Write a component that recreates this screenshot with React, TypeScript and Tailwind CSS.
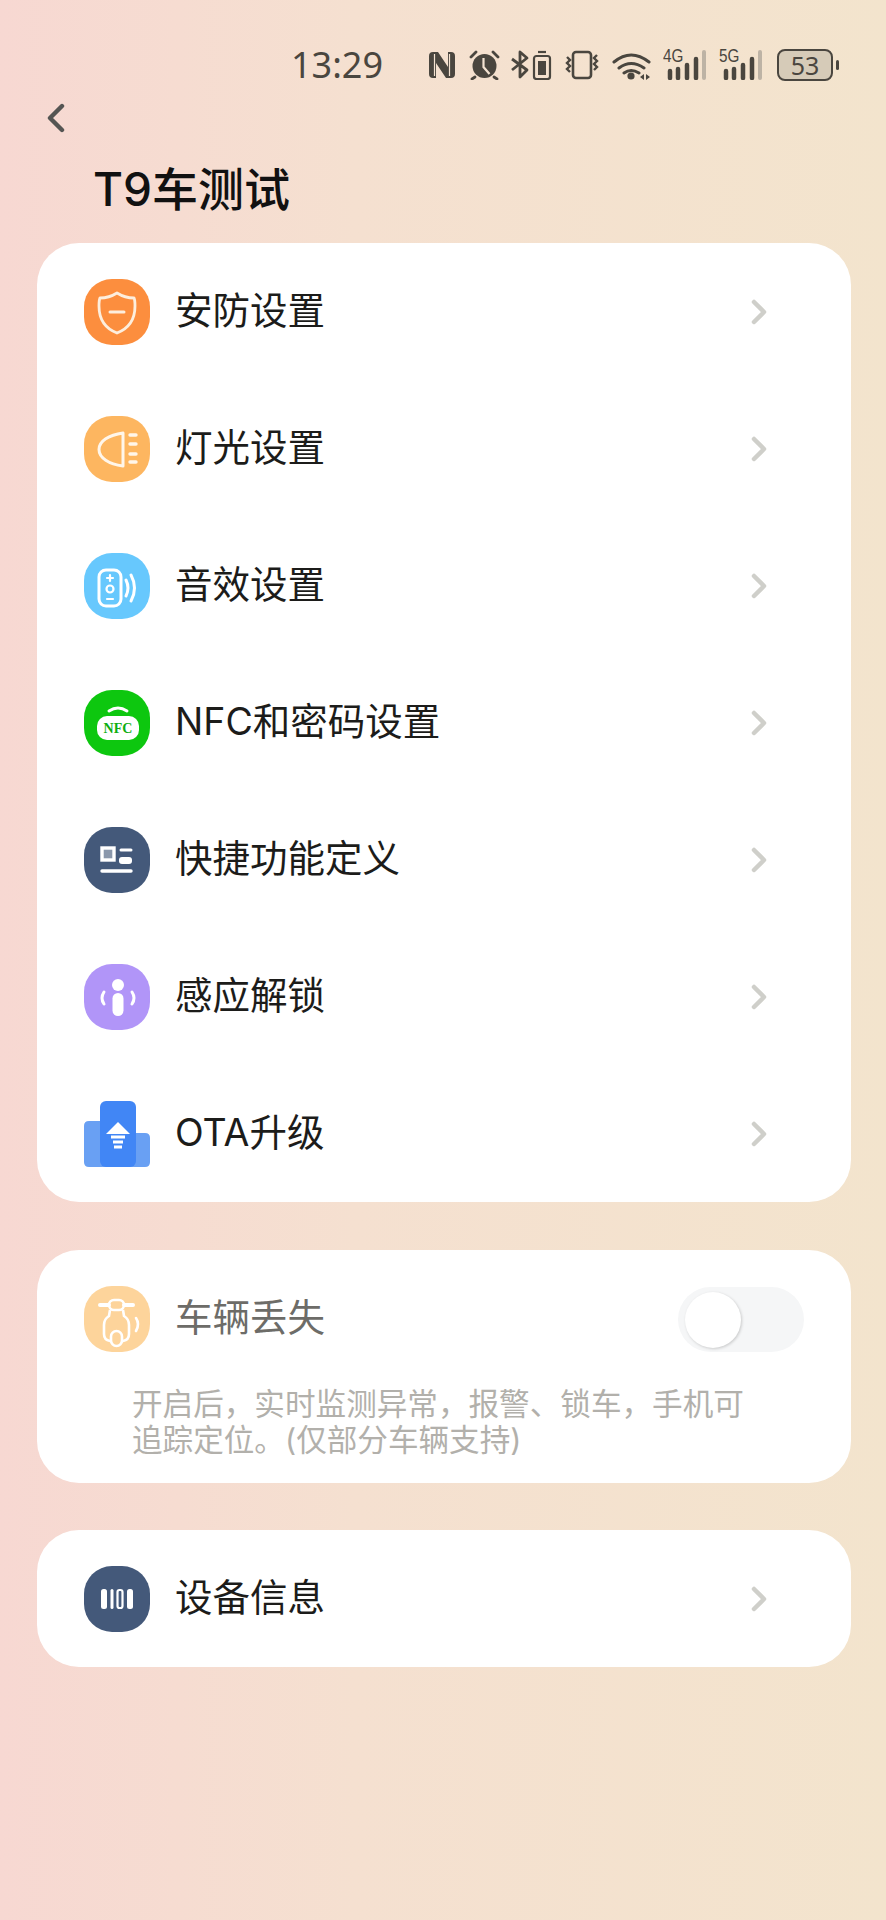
import type { ReactNode } from 'react';

const ink = '#4a463f';

function NfcMark() {
  return (
    <svg width="28" height="28" viewBox="0 0 28 28">
      <path d="M5 1h5l10 15V1h3q4 0 4 4v18q0 4-4 4h-5L8 12v15H5q-4 0-4-4V5q0-4 4-4z" fill={ink} />
      <path d="M6.500 3v22M21.500 3v22" stroke="#f4e3d2" strokeWidth="1.200" />
    </svg>
  );
}

function AlarmMark() {
  return (
    <svg width="31" height="30" viewBox="0 0 31 30">
      <circle cx="15.500" cy="16" r="12" fill={ink} />
      <path d="M14.500 8v9l6 7" stroke="#f4e3d2" strokeWidth="2.200" fill="none" />
      <path d="M2 7l5-5M29 7l-5-5M6 27l-3 2M25 27l3 2" stroke={ink} strokeWidth="2.800" strokeLinecap="round" />
    </svg>
  );
}

function BluetoothBatteryMark() {
  return (
    <svg width="41" height="30" viewBox="0 0 41 30">
      <path d="M1 9l15 11-7 7V2l7 6L1 20" stroke={ink} strokeWidth="2.800" fill="none" strokeLinejoin="round" />
      <rect x="23" y="6" width="16" height="23" rx="2.500" stroke={ink} strokeWidth="2.200" fill="none" />
      <rect x="27" y="11" width="8" height="14" fill={ink} />
      <path d="M27 2h8" stroke={ink} strokeWidth="2.200" />
    </svg>
  );
}

function VibrateMark() {
  return (
    <svg width="36" height="30" viewBox="0 0 36 30">
      <rect x="9" y="2" width="18" height="26" rx="3" stroke={ink} strokeWidth="2.600" fill="none" />
      <path d="M3 7l3 3-3 3 3 3-3 3 3 3M33 5l-3 3 3 3-3 3 3 3-3 3" stroke={ink} strokeWidth="2.400" fill="none" />
    </svg>
  );
}

function WifiMark() {
  return (
    <svg width="39" height="30" viewBox="0 0 39 30">
      <path d="M2 12q17-14 35 0M7 18q12-9 25 0M12 23q7-5 15 0" stroke={ink} strokeWidth="3" fill="none" strokeLinecap="round" />
      <circle cx="19" cy="26" r="3.600" fill={ink} />
      <path d="M28 27l4-3v6zM38 27l-4-3v6z" fill={ink} />
    </svg>
  );
}

function SignalMark({ label }: { label: string }) {
  return (
    <div className="relative h-[30px] w-[44px]">
      <span className="absolute left-0 top-[-4px] origin-left scale-x-[0.85] text-[18px] font-medium leading-[20px] text-[#4a463f] [font-family:'Liberation_Sans',sans-serif]">
        {label}
      </span>
      <svg className="absolute inset-0" width="44" height="30" viewBox="0 0 44 30">
        <path d="M7 21v7M15 19v9M24 15v13M33 9v19" stroke={ink} strokeWidth="4.500" strokeLinecap="round" />
        <path d="M41 2v26" stroke="#bdb3a5" strokeWidth="4" strokeLinecap="round" />
      </svg>
    </div>
  );
}

function StatusBar() {
  return (
    <div className="flex h-[56px] items-center pl-[291px] pt-[2px]">
      <span className="w-[137px] text-[36px] leading-[56px] text-[#4a463f] [font-family:'Noto_Sans',sans-serif]">13:29</span>
      <div className="flex items-center">
        <NfcMark />
        <div className="ml-[13px]"><AlarmMark /></div>
        <div className="ml-[11px]"><BluetoothBatteryMark /></div>
        <div className="ml-[12px]"><VibrateMark /></div>
        <div className="ml-[12px]"><WifiMark /></div>
        <div className="ml-[12px]"><SignalMark label="4G" /></div>
        <div className="ml-[12px]"><SignalMark label="5G" /></div>
        <div className="ml-[14px] flex items-center">
          <div className="flex h-[32px] w-[56px] items-center justify-center rounded-[8px] border-2 border-[#4a463f] bg-[#d6cbb8] text-[25px] leading-none text-[#4a463f] [font-family:'Noto_Sans',sans-serif]">
            53
          </div>
          <div className="ml-[3px] h-[10px] w-[3px] rounded-full bg-[#4a463f]" />
        </div>
      </div>
    </div>
  );
}

function IconTile({ bg, children }: { bg: string; children: ReactNode }) {
  return (
    <div className={`h-[66px] w-[66px] shrink-0 rounded-[28px] ${bg}`}>
      <svg width="66" height="66" viewBox="0 0 66 66">{children}</svg>
    </div>
  );
}

function ShieldIcon() {
  return (
    <IconTile bg="bg-[#fc8e3e]">
      <path d="M33 14q8 5 17 5 1 2 1 8 0 20-18 27Q15 47 15 27q0-6 1-8 9 0 17-5z" stroke="#fdeedd" strokeWidth="2.800" fill="none" strokeLinejoin="round" />
      <path d="M26 33h14" stroke="#fdeedd" strokeWidth="3" strokeLinecap="round" />
    </IconTile>
  );
}

function LightIcon() {
  return (
    <IconTile bg="bg-[#fdb660]">
      <path d="M39 17v33C25 48 15 42 15 33.500S25 19 39 17z" stroke="#fff6ea" strokeWidth="3" fill="none" strokeLinejoin="round" />
      <path d="M46 19h6M46 28h6M46 38h6M46 46h6" stroke="#fff6ea" strokeWidth="3.400" strokeLinecap="round" />
    </IconTile>
  );
}

function RemoteIcon() {
  return (
    <IconTile bg="bg-[#67c8fd]">
      <rect x="15" y="17" width="22" height="36" rx="7" stroke="#fff" strokeWidth="3" fill="none" />
      <path d="M26 22v6M23 25h6M23 46h6" stroke="#fff" strokeWidth="2.200" strokeLinecap="round" />
      <circle cx="26" cy="36" r="3.500" stroke="#fff" strokeWidth="2.200" fill="none" />
      <path d="M42 27q4 8 0 16M47 22q7 13 0 26" stroke="#fff" strokeWidth="3" fill="none" strokeLinecap="round" />
    </IconTile>
  );
}

function NfcIcon() {
  return (
    <IconTile bg="bg-[#0dc70f]">
      <path d="M25 21q9-6 18 0" stroke="#fff" strokeWidth="3" fill="none" strokeLinecap="round" />
      <rect x="13" y="26" width="42" height="24" rx="10" fill="#fff" />
      <text x="34" y="43" textAnchor="middle" fontSize="14" fontWeight="700" fill="#0dae10" fontFamily="'Liberation Serif', serif">NFC</text>
    </IconTile>
  );
}

function ShortcutIcon() {
  return (
    <IconTile bg="bg-[#44597a]">
      <rect x="18" y="21" width="12" height="12" stroke="#fff" strokeWidth="3.400" fill="#8a97ab" />
      <path d="M37 23h10" stroke="#fff" strokeWidth="3" strokeLinecap="round" />
      <rect x="35" y="30" width="13" height="7" rx="3" fill="#fff" />
      <path d="M18 44h29" stroke="#fff" strokeWidth="3.400" strokeLinecap="round" />
    </IconTile>
  );
}

function SenseIcon() {
  return (
    <IconTile bg="bg-[#b195f8]">
      <circle cx="34" cy="21" r="6" fill="#fff" />
      <rect x="28.500" y="29" width="11" height="23" rx="5.500" fill="#fff" />
      <path d="M20 28q-4 6 0 12M48 28q4 6 0 12" stroke="#fff" strokeWidth="3" fill="none" strokeLinecap="round" />
    </IconTile>
  );
}

function OtaIcon() {
  return (
    <div className="h-[66px] w-[66px] shrink-0">
      <svg width="66" height="66" viewBox="0 0 66 66">
        <path d="M5 20h20v46H5q-5 0-5-5V25q0-5 5-5z" fill="#69a0f3" />
        <path d="M40 32h21q5 0 5 5v24q0 5-5 5H40z" fill="#69a0f3" />
        <rect x="16" y="0" width="36" height="66" rx="6" fill="#4186f5" />
        <path d="M34 21l12 12H22z" fill="#fff" />
        <path d="M27 36h14M29 41h10M30 46h8" stroke="#fff" strokeWidth="3" />
      </svg>
    </div>
  );
}

function ScooterIcon() {
  return (
    <IconTile bg="bg-[#fdd49b]">
      <path d="M16 19h9M40 19h9" stroke="#fff" strokeWidth="4" strokeLinecap="round" />
      <rect x="25" y="14" width="15" height="10" rx="5" stroke="#fff" strokeWidth="2.600" fill="none" />
      <path d="M26 24l-1 6q-5 3-5 9v9q0 6 6 7h13q6-1 6-7v-9q0-6-5-9l-1-6" stroke="#fff" strokeWidth="2.600" fill="none" />
      <rect x="27" y="45" width="11" height="15" rx="5.500" stroke="#fff" strokeWidth="2.600" fill="#fdd49b" />
      <path d="M52 32q4 6 0 13" stroke="#fff" strokeWidth="2.600" fill="none" strokeLinecap="round" />
    </IconTile>
  );
}

function BarcodeIcon() {
  return (
    <IconTile bg="bg-[#44597a]">
      <rect x="17" y="23" width="6" height="20" rx="2.500" fill="#fff" />
      <rect x="26.500" y="23" width="3" height="20" rx="1.500" fill="#fff" />
      <rect x="33.500" y="24" width="5" height="18" rx="2" stroke="#fff" strokeWidth="2.200" fill="none" />
      <rect x="43" y="23" width="6" height="20" rx="2.500" fill="#fff" />
    </IconTile>
  );
}

function Chevron() {
  return (
    <svg width="16" height="26" viewBox="0 0 16 26" className="shrink-0">
      <path d="M3 3l10 10-10 10" stroke="#cfcfca" strokeWidth="4.500" fill="none" strokeLinejoin="round" strokeLinecap="round" />
    </svg>
  );
}

function Row({ icon, label }: { icon: ReactNode; label: string }) {
  return (
    <div className="flex h-[137px] items-center pl-[47px] pr-[84px]">
      {icon}
      <span className="ml-[25px] flex-1 pb-[2px] text-[37.500px] leading-[50px] text-[#1c1c1a]">{label}</span>
      <Chevron />
    </div>
  );
}

const items = [
  { label: '安防设置', icon: <ShieldIcon /> },
  { label: '灯光设置', icon: <LightIcon /> },
  { label: '音效设置', icon: <RemoteIcon /> },
  { label: 'NFC和密码设置', icon: <NfcIcon /> },
  { label: '快捷功能定义', icon: <ShortcutIcon /> },
  { label: '感应解锁', icon: <SenseIcon /> },
  { label: 'OTA升级', icon: <OtaIcon /> },
];

export default function App() {
  return (
    <div className="h-[1920px] w-[886px] overflow-hidden bg-gradient-to-r from-[#f7d8d2] via-[#f5e0d0] via-40% to-[#f3e4cd] [font-family:Inter,'Noto_Sans_CJK_SC',sans-serif]">
      <div className="pt-[36px]">
        <StatusBar />
      </div>

      <div className="mt-[11px] h-[30px] pl-[47px]">
        <svg width="18" height="30" viewBox="0 0 18 30">
          <path d="M15 3L3 15l12 12" stroke="#555553" strokeWidth="4.400" fill="none" strokeLinejoin="round" strokeLinecap="round" />
        </svg>
      </div>

      <h1 className="mb-[29px] mt-[31px] pl-[93px] text-[46px] font-medium leading-[50px] text-[#111]">T9车测试</h1>

      {/* Main settings */}
      <div className="ml-[37px] mr-[35px] rounded-[42px] bg-white">
        {items.map((item) => (
          <Row key={item.label} icon={item.icon} label={item.label} />
        ))}
      </div>

      {/* Vehicle lost */}
      <div className="ml-[37px] mr-[35px] mt-[48px] h-[233px] rounded-[42px] bg-white px-[47px] pt-[36px]">
        <div className="flex items-center">
          <ScooterIcon />
          <span className="ml-[25px] flex-1 pb-[2px] text-[37.500px] leading-[50px] text-[#6d6c68]">车辆丢失</span>
          <div className="h-[65px] w-[126px] rounded-full bg-[#f5f6f7] p-[5px] pl-[7px]">
            <div className="h-[56px] w-[56px] rounded-full bg-white shadow-[1px_1px_3px_rgba(0,0,0,0.18)]" />
          </div>
        </div>
        <p className="ml-[48px] mt-[34px] w-[640px] text-[30.600px] leading-[36px] text-[#b2b0ab]">
          开启后，实时监测异常，报警、锁车，手机可追踪定位。(仅部分车辆支持)
        </p>
      </div>

      {/* Device info */}
      <div className="ml-[37px] mr-[35px] mt-[47px] rounded-[42px] bg-white">
        <Row icon={<BarcodeIcon />} label="设备信息" />
      </div>
    </div>
  );
}
